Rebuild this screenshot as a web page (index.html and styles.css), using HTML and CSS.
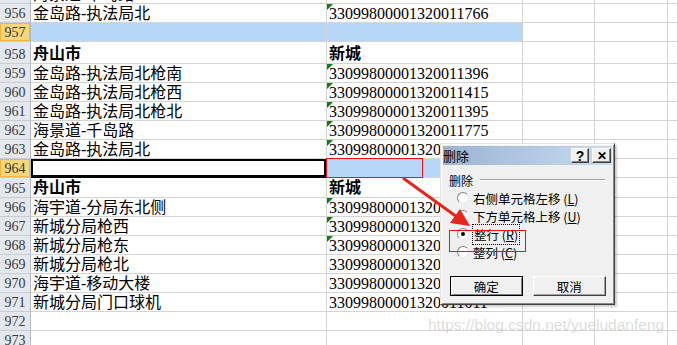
FILE: index.html
```html
<!DOCTYPE html>
<html lang="zh-CN">
<head>
    <meta charset="UTF-8">
    <title>删除</title>
    <link rel="stylesheet" href="styles.css">
</head>
<body>
    <div class="sheet">
        <div class="row"><div class="rh">955</div><div class="c">海景道-千岛路</div><div class="c num">33099800001320011775</div><div class="c"></div><div class="c"></div><div class="c"></div></div>
        <div class="row"><div class="rh">956</div><div class="c">金岛路-执法局北</div><div class="c num tri">33099800001320011766</div><div class="c"></div><div class="c"></div><div class="c"></div></div>
        <div class="row"><div class="rh hl">957</div><div class="c fill"></div><div class="c fill"></div><div class="c"></div><div class="c"></div><div class="c"></div></div>
        <div class="row tall"><div class="rh">958</div><div class="c bold">舟山市</div><div class="c bold">新城</div><div class="c"></div><div class="c"></div><div class="c"></div></div>
        <div class="row"><div class="rh">959</div><div class="c">金岛路-执法局北枪南</div><div class="c num tri">33099800001320011396</div><div class="c"></div><div class="c"></div><div class="c"></div></div>
        <div class="row"><div class="rh">960</div><div class="c">金岛路-执法局北枪西</div><div class="c num tri">33099800001320011415</div><div class="c"></div><div class="c"></div><div class="c"></div></div>
        <div class="row"><div class="rh">961</div><div class="c">金岛路-执法局北枪北</div><div class="c num tri">33099800001320011395</div><div class="c"></div><div class="c"></div><div class="c"></div></div>
        <div class="row"><div class="rh">962</div><div class="c">海景道-千岛路</div><div class="c num tri">33099800001320011775</div><div class="c"></div><div class="c"></div><div class="c"></div></div>
        <div class="row"><div class="rh">963</div><div class="c">金岛路-执法局北</div><div class="c num tri">33099800001320011767</div><div class="c"></div><div class="c"></div><div class="c"></div></div>
        <div class="row"><div class="rh hl">964</div><div class="c active"></div><div class="c fill"></div><div class="c fill"></div><div class="c"></div><div class="c"></div></div>
        <div class="row mid"><div class="rh">965</div><div class="c bold">舟山市</div><div class="c bold">新城</div><div class="c"></div><div class="c"></div><div class="c"></div></div>
        <div class="row"><div class="rh">966</div><div class="c">海宇道-分局东北侧</div><div class="c num tri">33099800001320011012</div><div class="c"></div><div class="c"></div><div class="c"></div></div>
        <div class="row"><div class="rh">967</div><div class="c">新城分局枪西</div><div class="c num tri">33099800001320011013</div><div class="c"></div><div class="c"></div><div class="c"></div></div>
        <div class="row"><div class="rh">968</div><div class="c">新城分局枪东</div><div class="c num tri">33099800001320011014</div><div class="c"></div><div class="c"></div><div class="c"></div></div>
        <div class="row"><div class="rh">969</div><div class="c">新城分局枪北</div><div class="c num">33099800001320011015</div><div class="c"></div><div class="c"></div><div class="c"></div></div>
        <div class="row"><div class="rh">970</div><div class="c">海宇道-移动大楼</div><div class="c num">33099800001320011016</div><div class="c"></div><div class="c"></div><div class="c"></div></div>
        <div class="row"><div class="rh">971</div><div class="c">新城分局门口球机</div><div class="c num">33099800001320011011</div><div class="c"></div><div class="c"></div><div class="c"></div></div>
        <div class="row"><div class="rh">972</div><div class="c"></div><div class="c"></div><div class="c"></div><div class="c"></div><div class="c"></div></div>
        <div class="row"><div class="rh">973</div><div class="c"></div><div class="c"></div><div class="c"></div><div class="c"></div><div class="c"></div></div>
    </div>

    <!-- 标注框 -->
    <div class="mark mark-cell"></div>

    <div class="dlg">
        <div class="dlg-title">
            <span class="dlg-name">删除</span>
            <span class="tbtn">?</span>
            <span class="tbtn close">&#10005;</span>
        </div>
        <div class="dlg-body">
            <div class="group-head"><span>删除</span><span class="etch"></span></div>
            <div class="options">
                <div class="opt"><span class="radio"></span><span>右侧单元格左移 (<u>L</u>)</span></div>
                <div class="opt"><span class="radio"></span><span>下方单元格上移 (<u>U</u>)</span></div>
                <div class="opt"><span class="radio on"></span><span class="focus">整行 (<u>R</u>)</span></div>
                <div class="opt"><span class="radio"></span><span>整列 (<u>C</u>)</span></div>
            </div>
            <div class="buttons">
                <button class="btn default">确定</button>
                <button class="btn">取消</button>
            </div>
        </div>
    </div>

    <div class="mark mark-opt"></div>

    <svg class="arrow" width="678" height="345" viewBox="0 0 678 345">
        <line x1="403" y1="178" x2="457" y2="217" stroke="#e8251c" stroke-width="3"/>
        <polygon points="470,226 450,223 460,209" fill="#e8251c"/>
    </svg>

    <div class="watermark">https://blog.csdn.net/yueludanfeng</div>
</body>
</html>
```

FILE: styles.css
```css
body {
    margin: 0;
    width: 678px;
    height: 345px;
    overflow: hidden;
    position: relative;
    background: #fff;
    font-family: "Liberation Serif", "Noto Sans CJK SC", serif;
}

.sheet {
    margin-top: -15px;
}

.row {
    display: grid;
    grid-template-columns: 31px 296px 196px 72px 73px 1fr;
    height: 19px;
}

.row.tall {
    height: 22px;
}

.row.mid {
    height: 20px;
}

.c {
    box-sizing: border-box;
    border-right: 1px solid #d4d4d4;
    border-bottom: 1px solid #d4d4d4;
    display: flex;
    align-items: flex-end;
    padding: 0 0 0 2px;
    font-size: 16px;
    line-height: 17px;
    color: #000;
    white-space: nowrap;
    overflow: hidden;
    position: relative;
}

.rh {
    box-sizing: border-box;
    background: #e4e8ed;
    border-right: 1px solid #b3b9c3;
    border-bottom: 1px solid #c8ccd3;
    color: #3a3a3a;
    font-size: 14px;
    display: flex;
    align-items: flex-end;
    justify-content: center;
    line-height: 16px;
}

.rh.hl {
    background: #f8d67c;
    box-shadow: inset 0 0 0 1px #f0b441;
    color: #333;
}

.bold {
    font-weight: bold;
    line-height: 19px;
}

.fill {
    background: #b7d7f8;
}

.active {
    box-shadow: inset 0 0 0 2px #000;
    border-bottom-color: #000;
}

.tri::before {
    content: '';
    position: absolute;
    top: 0;
    left: 0;
    border-top: 6px solid #107c10;
    border-right: 6px solid transparent;
}

.mark {
    position: absolute;
    border: 1px solid #f01010;
    box-sizing: border-box;
}

.mark-cell {
    left: 326px;
    top: 158px;
    width: 97px;
    height: 20px;
}

.mark-opt {
    left: 449px;
    top: 230px;
    width: 77px;
    height: 22px;
}

/* 删除 对话框 */
.dlg {
    position: absolute;
    left: 440px;
    top: 143px;
    width: 175px;
    height: 162px;
    box-sizing: border-box;
    background: #f0f0f0;
    border: 1px solid;
    border-color: #e3e3e3 #404040 #404040 #e3e3e3;
    box-shadow: inset 1px 1px #fff, inset -1px -1px #8a8a8a, 2px 2px 2px rgba(0, 0, 0, 0.2);
    padding: 2px;
    font-family: "Noto Sans CJK SC", sans-serif;
    font-size: 12px;
}

.dlg-title {
    height: 19px;
    display: flex;
    align-items: center;
    gap: 3px;
    padding-right: 1px;
    background: linear-gradient(to right, #9cb4d3, #c8dbf0);
}

.dlg-name {
    flex: 1;
    font-size: 13px;
    color: #000;
}

.tbtn {
    width: 18px;
    height: 15px;
    box-sizing: border-box;
    background: #f0f0f0;
    border: 1px solid;
    border-color: #fff #404040 #404040 #fff;
    box-shadow: inset -1px -1px #808080;
    display: flex;
    align-items: center;
    justify-content: center;
    font-family: "Liberation Sans", sans-serif;
    font-weight: bold;
    font-size: 14px;
    line-height: 1;
}

.tbtn.close {
    width: 19px;
    font-size: 12px;
}

.dlg-body {
    padding: 7px 6px 0 6px;
}

.group-head {
    display: flex;
    align-items: center;
    gap: 7px;
    height: 16px;
    padding-right: 1px;
}

.etch {
    flex: 1;
    border-top: 1px solid #a0a0a0;
    border-bottom: 1px solid #fff;
}

.options {
    margin-top: 1px;
    padding-left: 8px;
    display: flex;
    flex-direction: column;
}

.opt {
    height: 18px;
    display: flex;
    align-items: center;
    gap: 4px;
    font-size: 12.5px;
}

.radio {
    width: 12px;
    height: 12px;
    box-sizing: border-box;
    border-radius: 50%;
    background: #fff;
    border: 1px solid;
    border-color: #808080 #e8e8e8 #e8e8e8 #808080;
    position: relative;
}

.radio.on::after {
    content: '';
    position: absolute;
    left: 3px;
    top: 3px;
    width: 4px;
    height: 4px;
    border-radius: 50%;
    background: #000;
}

.focus {
    outline: 1px dotted #000;
    outline-offset: 0;
    padding: 0 1px;
}

.buttons {
    margin-top: 15px;
    padding-left: 1px;
    display: flex;
    gap: 10px;
}

.btn {
    width: 75px;
    height: 20px;
    box-sizing: border-box;
    background: #f0f0f0;
    border: 1px solid;
    border-color: #fff #404040 #404040 #fff;
    box-shadow: inset -1px -1px #a0a0a0;
    font-family: "Noto Sans CJK SC", sans-serif;
    font-size: 12.5px;
    padding: 0;
    color: #000;
}

.btn.default {
    width: 74px;
    border-color: #000;
    box-shadow: inset 1px 1px #fff, inset -1px -1px #808080;
}

.arrow {
    position: absolute;
    left: 0;
    top: 0;
    pointer-events: none;
}

.watermark {
    position: absolute;
    left: 428px;
    top: 316px;
    font-family: "Liberation Sans", sans-serif;
    font-size: 15.5px;
    color: rgba(190, 190, 190, 0.55);
    white-space: nowrap;
}
```
